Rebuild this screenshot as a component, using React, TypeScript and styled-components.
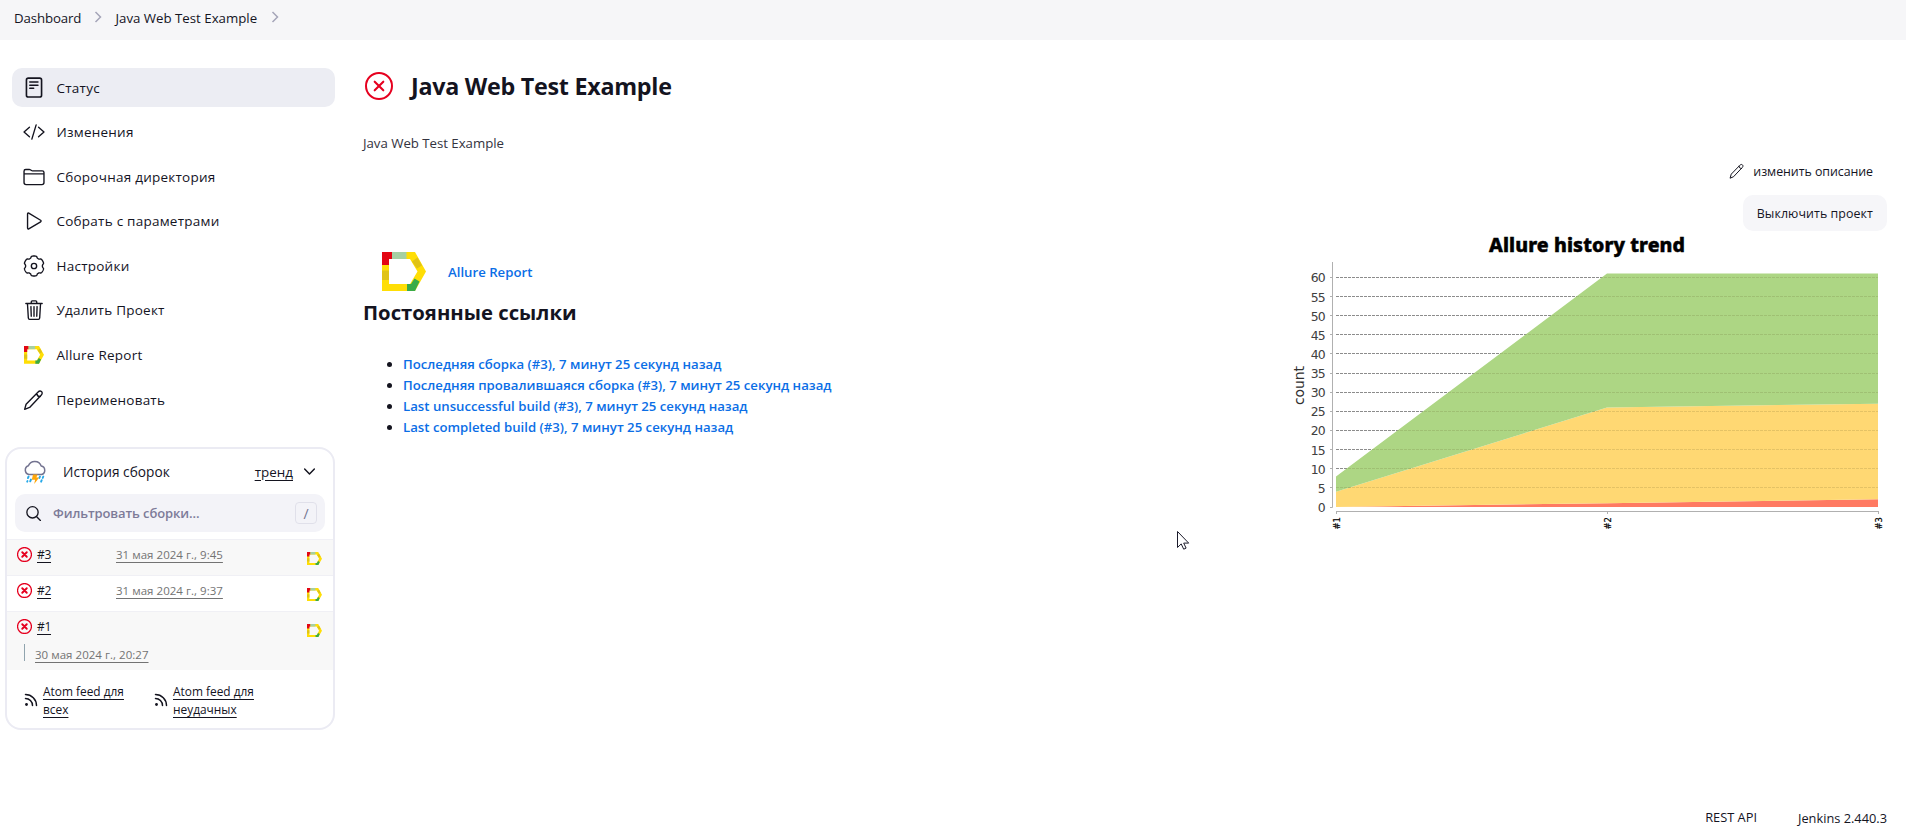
import React from "react";
import styled, { createGlobalStyle } from "styled-components";

const ink = "#14141f";
const red = "#e6001f";

const GlobalStyle = createGlobalStyle`
  *, *::before, *::after { box-sizing: border-box; }
  body {
    margin: 0;
    background: #fff;
    color: ${ink};
    font-family: "Open Sans", "Noto Sans", sans-serif;
    overflow: hidden;
  }
  svg { display: block; flex: none; }
`;

const Page = styled.div`
  position: relative;
  display: flex;
  flex-direction: column;
  height: 839px;
`;

const Breadcrumbs = styled.nav`
  display: flex;
  align-items: center;
  height: 40px;
  padding: 0 14px 5px;
  background: #f6f6f8;
  font-size: 13.25px;
`;

const Crumb = styled.a<{ $width: number }>`
  width: ${(p) => p.$width}px;
  white-space: nowrap;
  letter-spacing: ${(p) => (p.$width > 100 ? 0 : -0.12)}px;
`;

const CrumbArrow = styled.svg`
  width: 12px;
  height: 14px;
  margin: 0 12px 1px 11px;
  stroke: #a5a5b8;
  fill: none;
`;

const Columns = styled.div`
  display: flex;
  flex: 1;
  min-height: 0;
`;

const Sidebar = styled.aside`
  width: 363px;
  flex: none;
  padding-top: 28px;
`;

const Tasks = styled.nav`
  display: flex;
  flex-direction: column;
  gap: 5.6px;
  margin-left: 12px;
  width: 323px;
`;

const Task = styled.a<{ $active?: boolean }>`
  display: flex;
  align-items: center;
  gap: 11.5px;
  height: 39px;
  padding: 0 11px;
  border-radius: 10px;
  background: ${(p) => (p.$active ? "#ecedf3" : "transparent")};
  font-size: 13.5px;
  font-weight: 500;
  letter-spacing: 0.24px;
`;

const LineIcon = styled.svg<{ $size?: number; $weight?: number }>`
  width: ${(p) => p.$size ?? 22}px;
  height: ${(p) => p.$size ?? 22}px;
  fill: none;
  stroke: ${ink};
  stroke-width: ${(p) => p.$weight ?? 32};
  stroke-linecap: round;
  stroke-linejoin: round;
`;

const HistoryCard = styled.section`
  margin: 28px 0 0 5px;
  width: 330px;
  height: 283px;
  border: 2px solid #ebebf3;
  border-radius: 16px;
  overflow: hidden;
`;

const HistoryHeader = styled.header`
  display: flex;
  align-items: center;
  height: 45px;
  padding: 0 16px 0 16px;
  font-size: 13.7px;
  font-weight: 500;
  letter-spacing: 0.03px;
`;

const HistoryTitle = styled.span`
  margin-left: 16px;
  flex: 1;
`;

const TrendLink = styled.a`
  margin-right: 9px;
  font-size: 13.4px;
  text-decoration: underline;
  text-underline-offset: 3px;
`;

const Search = styled.div`
  display: flex;
  align-items: center;
  height: 38px;
  margin: 0 8px 7px;
  padding: 0 8px 0 10px;
  border-radius: 10px;
  background: #f3f3f8;
`;

const Placeholder = styled.span`
  flex: 1;
  margin-left: 11px;
  color: #7d7b98;
  font-size: 13px;
  font-weight: 600;
  letter-spacing: -0.1px;
`;

const Key = styled.kbd`
  display: grid;
  place-items: center;
  width: 22px;
  height: 22px;
  border: 1px solid #e0e0ea;
  border-radius: 4px;
  color: #737390;
  font: 14px "Open Sans", sans-serif;
`;

const BuildRow = styled.div<{ $shaded?: boolean; $tall?: boolean }>`
  display: grid;
  grid-template-columns: 19px 79px 1fr 15px;
  grid-template-rows: 28px 28px;
  align-items: center;
  height: ${(p) => (p.$tall ? 59 : 36)}px;
  padding: 0 11px 0 10px;
  border-top: 1px solid #f0f0f5;
  background: ${(p) => (p.$shaded ? "#f8f8f8" : "#fff")};
  font-size: 12px;
  overflow: hidden;
`;

const BuildNumber = styled.a`
  letter-spacing: -0.3px;
  margin-left: 1px;
  text-decoration: underline;
  text-underline-offset: 3px;
`;

const BuildDate = styled.a`
  color: #737373;
  font-size: 11.5px;
  text-decoration: underline;
  text-underline-offset: 3px;
  white-space: nowrap;
  letter-spacing: 0.03px;
  margin-left: 1px;
`;

const ReportBadge = styled.a`
  grid-column: 4;
  padding-top: 8px;
`;

const WrappedDate = styled.div`
  display: flex;
  align-items: center;
  grid-column: 1 / -1;
  gap: 9px;
  padding-left: 7px;
  &::before {
    content: "";
    width: 1px;
    height: 17px;
    margin-top: -4px;
    background: #90a4ae;
  }
`;

const Feeds = styled.div`
  display: flex;
  padding: 12px 17px 0;
`;

const Feed = styled.a`
  display: flex;
  align-items: center;
  gap: 5px;
  width: 130px;
  font-size: 11.9px;
  line-height: 18px;
  text-decoration: underline;
  text-underline-offset: 3px;
`;

const FeedText = styled.span`
  width: 88px;
`;

const Main = styled.main`
  flex: 1;
  display: flex;
  flex-direction: column;
  padding: 32px 19px 0 0;
`;

const TitleRow = styled.div`
  display: flex;
  align-items: center;
  gap: 18px;
  height: 28px;
  padding-left: 2px;
`;

const Title = styled.h1`
  margin: 0;
  font-size: 23.3px;
  font-weight: 700;
  letter-spacing: -0.27px;
`;

const Description = styled.div`
  margin-top: 33px;
  font-size: 13.25px;
  line-height: 20px;
  letter-spacing: -0.03px;
  color: #333340;
`;

const Actions = styled.div`
  display: flex;
  flex-direction: column;
  align-items: flex-end;
  gap: 6px;
`;

const ActionButton = styled.button<{ $filled?: boolean }>`
  display: flex;
  align-items: center;
  gap: 8px;
  height: 36px;
  padding: 0 14px;
  border: 0;
  border-radius: 10px;
  background: ${(p) => (p.$filled ? "#f6f6f9" : "transparent")};
  color: ${ink};
  font: 12.4px "Open Sans", sans-serif;
  letter-spacing: ${(p) => (p.$filled ? 0.08 : -0.05)}px;
`;

const Body = styled.div`
  display: flex;
  justify-content: space-between;
`;

const Links = styled.div`
  padding-top: 21px;
`;

const ReportRow = styled.a`
  display: flex;
  align-items: center;
  gap: 22px;
  height: 39px;
  padding-left: 19px;
  color: #0b6ee6;
  font-size: 13.2px;
  font-weight: 600;
`;

const SectionTitle = styled.h2`
  margin: 8px 0 29px;
  font-size: 20.3px;
  line-height: 26px;
  font-weight: 700;
`;

const Permalinks = styled.ul`
  margin: 0;
  padding-left: 40px;
  font-size: 13.2px;
  line-height: 21.1px;
`;

const Permalink = styled.a`
  color: #0b6ee6;
  font-weight: 600;
`;

const Footer = styled.footer`
  display: flex;
  justify-content: flex-end;
  gap: 41px;
  height: 32px;
  padding-right: 19px;
  font-size: 12.8px;
  line-height: 20px;
`;

const FooterVersion = styled.span`
  padding-top: 1px;
`;

const Cursor = styled.svg`
  position: absolute;
  left: 1176px;
  top: 530px;
`;

const StatusIcon = ({ size, thin }: { size: number; thin?: boolean }) => (
  <svg width={size} height={size} viewBox="0 0 28 28" fill="none" stroke={red} strokeLinecap="round">
    <circle cx="14" cy="14" r={13} strokeWidth={thin ? 2 : 2.4} />
    <path d={thin ? "M9.7 9.7l8.6 8.6M18.3 9.7l-8.6 8.6" : "M9.8 9.8l8.4 8.4M18.2 9.8l-8.4 8.4"} strokeWidth={thin ? 2.1 : 3.6} />
  </svg>
);

const AllureLogo = ({ width }: { width: number }) => (
  <svg width={width} height={(width * 39) / 44} viewBox="0 0 44 39">
    <path fill="#ffde05" d="M0 0h33l11 19.5L33 39H0zM7 7v25h21l7.5-12.5L28 7z" fillRule="evenodd" />
    <path fill="#e30613" d="M0 0h10v7H7v6H0z" />
    <path fill="#a6d0a3" d="M10 0h14.5v7H10z" />
    <path fill="#e0c316" d="M0 18.5h7V28H0zM35.5 5.5l4.5 8-5 3-5-7z" />
    <path fill="#3bab48" d="M25 32h4l3.5-5.5 5 3L33 39h-8z" />
  </svg>
);

const gearPath =
  Array.from({ length: 144 }, (_, i) => {
    const a = (i / 144) * Math.PI * 2;
    const r = 213 + 20 * Math.tanh(2.5 * (Math.cos(6 * a) + 0.45));
    return `${i ? "L" : "M"}${(256 + r * Math.sin(a)).toFixed(1)} ${(256 - r * Math.cos(a)).toFixed(1)}`;
  }).join("") + "Z";

const PencilShape = () => (
  <path d="M38 474l34-118L346 74c28-30 60-36 84-14s22 56-8 86L154 430zM320 102c6 50 38 78 84 76" />
);

const ICONS: Record<string, React.ReactNode> = {
  status: (
    <>
      <rect x="80" y="26" width="352" height="440" rx="44" strokeWidth="38" />
      <path d="M158 118h190M158 190h190M158 262h90" strokeWidth="36" />
    </>
  ),
  changes: <path d="M150 368L24 256l126-112M362 368l126-112-126-112M306 90l-100 332" />,
  folder: (
    <path d="M440 432H72a48 48 0 01-48-48V120a40 40 0 0140-40h84a40 40 0 0122 6.7l28 18.6a40 40 0 0022 6.7H448a40 40 0 0140 40v232a48 48 0 01-48 48zM24 184h464" />
  ),
  play: (
    <path d="M106 91v330c0 17.4 14 24.5 28 17.2L410 276c14-8 14-29 0-37L134 74c-14-8-28 0-28 17z" />
  ),
  gear: (
    <>
      <path d={gearPath} />
      <circle cx="256" cy="256" r="62" />
    </>
  ),
  trash: (
    <path d="M104 112l20 330c1 18 14 32 32 32h200c18 0 31-14 32-32l20-330M66 104h380M192 104V68a24 24 0 0124-24h80a24 24 0 0124 24v36M256 176v224M184 176l8 224M328 176l-8 224" />
  ),
  pencil: <PencilShape />,
};

const TASKS: { icon: string; label: string }[] = [
  { icon: "status", label: "Статус" },
  { icon: "changes", label: "Изменения" },
  { icon: "folder", label: "Сборочная директория" },
  { icon: "play", label: "Собрать с параметрами" },
  { icon: "gear", label: "Настройки" },
  { icon: "trash", label: "Удалить Проект" },
  { icon: "allure", label: "Allure Report" },
  { icon: "pencil", label: "Переименовать" },
];

const TaskLogo = styled.span`
  width: 22px;
  padding-left: 1px;
`;

const StormIcon = () => (
  <svg width="24" height="24" viewBox="0 0 24 24" fill="none" strokeLinecap="round" strokeLinejoin="round">
    <path d="M6 14.5a4.5 4.5 0 0 1-.6-8.7 6.8 6.8 0 0 1 12.8.3A4.3 4.3 0 0 1 18.5 14.5z" stroke="#737390" strokeWidth="1.5" />
    <path d="M5.6 16.5l-.7 1.6M8 19.5l-.8 1.8M4.5 21l-.3.7M17 16.5l-.6 1.4M20.3 16.5l-.6 1.4M18.7 20.2l-.6 1.5" stroke="#27a9e8" strokeWidth="1.9" />
    <path d="M10 14.6h4.6l-1.2 3h2.8l-5 6.4.9-4.2H8.8z" fill="#fea70b" />
  </svg>
);

const CHART = { left: 49, right: 591, zero: 276, unit: 3.826 };
const SERIES = [
  { color: "#ff7a62", low: [0, 0, 0], high: [0, 1, 2] },
  { color: "#ffd873", low: [0, 1, 2], high: [4, 26, 27] },
  { color: "#add684", low: [4, 26, 27], high: [8, 61, 61] },
];
const chartX = (i: number) => CHART.left + (i * (CHART.right - CHART.left)) / 2;
const chartY = (v: number) => CHART.zero - v * CHART.unit;
const TICKS = Array.from({ length: 13 }, (_, i) => i * 5);

const gridLines = (stroke: string, clip?: string) => (
  <g stroke={stroke} strokeDasharray="3 1" clipPath={clip}>
    {TICKS.slice(1).map((v) => (
      <path key={v} d={`M${CHART.left} ${Math.floor(chartY(v)) + 0.5}H${CHART.right}`} />
    ))}
  </g>
);

const TrendChart = () => (
  <svg width="600" height="310" viewBox="0 0 600 310">
    <text
      x="202"
      y="21"
      fontFamily="Noto Sans, sans-serif"
      fontWeight="800"
      fontSize="19.5"
      textLength="196"
      fill="#000"
      stroke="#000"
      strokeWidth="0.5"
    >
      Allure history trend
    </text>
    {gridLines("#8c8c8c")}
    {SERIES.map((s) => (
      <polygon
        key={s.color}
        fill={s.color}
        points={[
          ...s.high.map((v, i) => `${chartX(i)},${chartY(v)}`),
          ...s.low.map((v, i) => `${chartX(i)},${chartY(v)}`).reverse(),
        ].join(" ")}
      />
    ))}
    <clipPath id="areas">
      <polygon points={`49,276 ${[8, 61, 61].map((v, i) => `${chartX(i)},${chartY(v)}`).join(" ")} 591,276`} />
    </clipPath>
    {gridLines("rgba(90, 80, 30, 0.16)", "url(#areas)")}
    <g stroke="#b0b0b0" fill="none">
      <path d="M45.5 31V276.5M49 280.5H592" />
      {TICKS.map((v) => (
        <path key={v} d={`M43 ${Math.floor(chartY(v)) + 0.5}h2.5`} />
      ))}
      {[0, 1, 2].map((i) => (
        <path key={i} d={`M${chartX(i) + 0.5} 280v3`} />
      ))}
    </g>
    <g fontFamily="DejaVu Sans, sans-serif" fontSize="12.4" fill="#404040" textAnchor="end" letterSpacing="-0.7">
      {TICKS.map((v) => (
        <text key={v} x="38" y={chartY(v) + 5}>
          {v}
        </text>
      ))}
    </g>
    <text transform="translate(17 174) rotate(-90)" fontFamily="DejaVu Sans, sans-serif" fontSize="14" textLength="39" fill="#303030">
      count
    </text>
    <g fontFamily="DejaVu Sans, sans-serif" fontSize="8.4" fontWeight="400" fill="#000" stroke="#000" strokeWidth="0.2">
      {["#1", "#2", "#3"].map((label, i) => (
        <text key={label} transform={`translate(${chartX(i) + 3.5} 298.5) rotate(-90)`}>
          {label}
        </text>
      ))}
    </g>
  </svg>
);

const AllureBadge = () => (
  <ReportBadge>
    <AllureLogo width={15} />
  </ReportBadge>
);

const FeedLink = ({ children }: { children: React.ReactNode }) => (
  <Feed>
    <svg width="14" height="14" viewBox="0 0 14 14" fill="none" stroke={ink} strokeWidth="1.5" strokeLinecap="round">
      <circle cx="2.5" cy="11.5" r="1.4" fill={ink} stroke="none" />
      <path d="M1.5 5.5a7 7 0 0 1 7 7M1.5 1.5a11 11 0 0 1 11 11" />
    </svg>
    <FeedText>{children}</FeedText>
  </Feed>
);

const Chevron = () => (
  <CrumbArrow viewBox="0 0 12 14">
    <path d="M3.5 2l5 5-5 5" strokeWidth="1.5" />
  </CrumbArrow>
);

export default function App() {
  return (
    <Page>
      <GlobalStyle />
      <Breadcrumbs>
        <Crumb $width={66.5}>Dashboard</Crumb>
        <Chevron />
        <Crumb $width={142}>Java Web Test Example</Crumb>
        <Chevron />
      </Breadcrumbs>
      <Columns>
        <Sidebar>
          <Tasks>
            {TASKS.map((t, i) => (
              <Task key={t.label} $active={i === 0}>
                {t.icon === "allure" ? (
                  <TaskLogo>
                    <AllureLogo width={20} />
                  </TaskLogo>
                ) : (
                  <LineIcon viewBox="0 0 512 512">{ICONS[t.icon]}</LineIcon>
                )}
                {t.label}
              </Task>
            ))}
          </Tasks>
          <HistoryCard>
            <HistoryHeader>
              <StormIcon />
              <HistoryTitle>История сборок</HistoryTitle>
              <TrendLink>тренд</TrendLink>
              <LineIcon viewBox="0 0 512 512" $size={15} $weight={50}>
                <path d="M90 172l166 170 166-170" />
              </LineIcon>
            </HistoryHeader>
            <Search>
              <LineIcon viewBox="0 0 512 512" $size={17} $weight={40}>
                <circle cx="226" cy="221" r="170" />
                <path d="M352 352l112 112" />
              </LineIcon>
              <Placeholder>Фильтровать сборки...</Placeholder>
              <Key>/</Key>
            </Search>
            <BuildRow $shaded>
              <StatusIcon size={15} />
              <BuildNumber>#3</BuildNumber>
              <BuildDate>31 мая 2024 г., 9:45</BuildDate>
              <AllureBadge />
            </BuildRow>
            <BuildRow>
              <StatusIcon size={15} />
              <BuildNumber>#2</BuildNumber>
              <BuildDate>31 мая 2024 г., 9:37</BuildDate>
              <AllureBadge />
            </BuildRow>
            <BuildRow $shaded $tall>
              <StatusIcon size={15} />
              <BuildNumber>#1</BuildNumber>
              <AllureBadge />
              <WrappedDate>
                <BuildDate>30 мая 2024 г., 20:27</BuildDate>
              </WrappedDate>
            </BuildRow>
            <Feeds>
              <FeedLink>Atom feed для всех</FeedLink>
              <FeedLink>Atom feed для неудачных</FeedLink>
            </Feeds>
          </HistoryCard>
        </Sidebar>
        <Main>
          <TitleRow>
            <StatusIcon size={28} thin />
            <Title>Java Web Test Example</Title>
          </TitleRow>
          <Description>Java Web Test Example</Description>
          <Actions>
            <ActionButton>
              <LineIcon viewBox="0 0 512 512" $size={16}>
                <PencilShape />
              </LineIcon>
              изменить описание
            </ActionButton>
            <ActionButton $filled>Выключить проект</ActionButton>
          </Actions>
          <Body>
            <Links>
              <ReportRow>
                <AllureLogo width={44} />
                Allure Report
              </ReportRow>
              <SectionTitle>Постоянные ссылки</SectionTitle>
              <Permalinks>
                {[
                  "Последняя сборка (#3), 7 минут 25 секунд назад",
                  "Последняя провалившаяся сборка (#3), 7 минут 25 секунд назад",
                  "Last unsuccessful build (#3), 7 минут 25 секунд назад",
                  "Last completed build (#3), 7 минут 25 секунд назад",
                ].map((text) => (
                  <li key={text}>
                    <Permalink>{text}</Permalink>
                  </li>
                ))}
              </Permalinks>
            </Links>
            <TrendChart />
          </Body>
        </Main>
      </Columns>
      <Footer>
        <span>REST API</span>
        <FooterVersion>Jenkins 2.440.3</FooterVersion>
      </Footer>
      <Cursor width="14" height="21" viewBox="0 0 14 21">
        <path d="M1.5 1.5v16l3.7-3.6 2.5 5.3 2.4-1.1-2.4-5h5z" fill="#fff" stroke="#1b1b2b" />
      </Cursor>
    </Page>
  );
}
